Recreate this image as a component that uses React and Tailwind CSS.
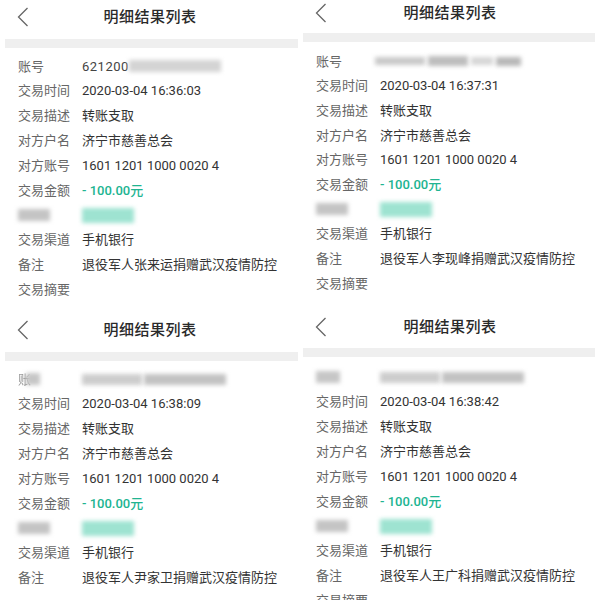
const FONT = "font-['Roboto','Noto_Sans_CJK_SC',sans-serif]"

const PANELS = [
  {
    time: '2020-03-04 16:36:03',
    note: '退役军人张来运捐赠武汉疫情防控',
    pt: 'pt-[5px]', gap: 'mt-[10px]', rowsPt: 'pt-[6px]', barX: 'ml-[5px] mr-[2px]', padX: 'pl-[18px]', chevX: 'pl-[17px]',
    row: 'h-[24.8px]', account: 'tl', summary: true,
  },
  {
    time: '2020-03-04 16:37:31',
    note: '退役军人李现峰捐赠武汉疫情防控',
    pt: 'pt-[1px]', gap: 'mt-[8px]', rowsPt: 'pt-[7px]', barX: 'ml-[3px] mr-[5px]', padX: 'pl-[16px]', chevX: 'pl-[15px]',
    row: 'h-[24.7px]', account: 'tr', summary: true,
  },
  {
    time: '2020-03-04 16:38:09',
    note: '退役军人尹家卫捐赠武汉疫情防控',
    pt: 'pt-[18px]', gap: 'mt-[10px]', rowsPt: 'pt-[6px]', barX: 'ml-[5px] mr-[2px]', padX: 'pl-[18px]', chevX: 'pl-[17px]',
    row: 'h-[24.8px]', account: 'bl', summary: false,
  },
  {
    time: '2020-03-04 16:38:42',
    note: '退役军人王广科捐赠武汉疫情防控',
    pt: 'pt-[15px]', gap: 'mt-[9px]', rowsPt: 'pt-[8px]', barX: 'ml-[3px] mr-[5px]', padX: 'pl-[16px]', chevX: 'pl-[15px]',
    row: 'h-[24.8px]', account: 'br', summary: true,
  },
]

function Chevron() {
  return (
    <svg width="12" height="20" viewBox="0 0 12 20" fill="none">
      <polyline points="10.5,1 1.5,10 10.5,19" stroke="#666" strokeWidth="1.3" />
    </svg>
  )
}

function Blur({ className }) {
  return <div className={`blur-[2px] ${className}`} />
}

function AccountRow({ kind, row }) {
  if (kind === 'tl') {
    return (
      <div className={`flex items-center ${row}`}>
        <span className="w-[64px] text-[#666]">账号</span>
        <span className="text-[#444] tracking-[0.5px]">621200</span>
        <Blur className="w-[92px] h-[12px] bg-[#d4d4d4]" />
      </div>
    )
  }
  if (kind === 'tr') {
    return (
      <div className={`flex items-center ${row}`}>
        <span className="w-[59px] text-[#666]">账号</span>
        <div className="flex items-center gap-[3px]">
          <Blur className="w-[50px] h-[8px] bg-[#c9c9c9]" />
          <Blur className="w-[40px] h-[10px] bg-[#bdbdbd]" />
          <Blur className="w-[22px] h-[8px] bg-[#d6d6d6]" />
          <Blur className="w-[25px] h-[9px] bg-[#b8b8b8]" />
        </div>
      </div>
    )
  }
  return (
    <div className={`flex items-center ${row}`}>
      <div className="w-[64px] flex items-center">
        {kind === 'bl' && <span className="text-[#999] blur-[0.6px]">账</span>}
        <Blur className={`${kind === 'bl' ? 'w-[14px] -ml-[5px]' : 'w-[24px]'} h-[12px] bg-[#c6c6c6]`} />
      </div>
      <div className="flex items-center gap-[2px]">
        <Blur className="w-[60px] h-[11px] bg-[#cdcdcd]" />
        <Blur className="w-[82px] h-[11px] bg-[#c2c2c2]" />
      </div>
    </div>
  )
}

function Panel({ p }) {
  const rows = [
    ['交易时间', <span className="text-[#333]">{p.time}</span>],
    ['交易描述', <span className="text-[#333]">转账支取</span>],
    ['对方户名', <span className="text-[#333]">济宁市慈善总会</span>],
    ['对方账号', <span className="text-[#333]">1601 1201 1000 0020 4</span>],
    ['交易金额', <span className="text-[#21b491] font-medium">- 100.00元</span>],
    [
      <Blur className="w-[32px] h-[12px] bg-[#c4c4c4]" />,
      <Blur className="w-[52px] h-[15px] bg-[#9ee3d1]" />,
    ],
    ['交易渠道', <span className="text-[#333]">手机银行</span>],
    ['备注', <span className="text-[#333]">{p.note}</span>],
  ]
  if (p.summary) rows.push(['交易摘要', null])
  return (
    <div className={`h-[300px] overflow-hidden bg-white ${p.pt}`}>
      <div className="grid grid-cols-[1fr_auto_1fr] items-center h-[24px]">
        <div className={p.chevX}>
          <Chevron />
        </div>
        <div className="text-[15px] font-medium text-[#2a2a2a] tracking-[0.5px]">明细结果列表</div>
        <div />
      </div>
      <div className={`h-[9px] bg-[#efefef] ${p.gap} ${p.barX}`} />
      <div className={`${p.rowsPt} ${p.padX} text-[13px]`}>
        <AccountRow kind={p.account} row={p.row} />
        {rows.map(([label, value], i) => (
          <div key={i} className={`flex items-center ${p.row}`}>
            <div className="w-[64px] text-[#666]">{label}</div>
            <div>{value}</div>
          </div>
        ))}
      </div>
    </div>
  )
}

export default function App() {
  return (
    <div className={`w-[600px] h-[600px] bg-white grid grid-cols-2 ${FONT}`}>
      {PANELS.map((p, i) => (
        <Panel key={i} p={p} />
      ))}
    </div>
  )
}
